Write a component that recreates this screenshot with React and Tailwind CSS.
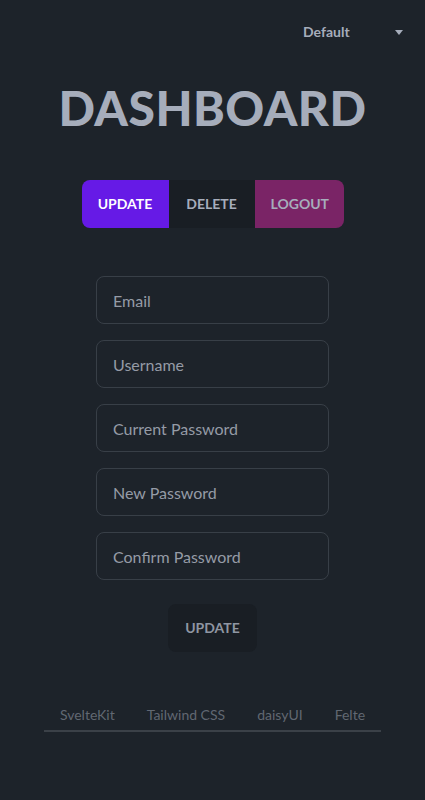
import { useState } from 'react';

const fields = ['Email', 'Username', 'Current Password', 'New Password', 'Confirm Password'];
const links = ['SvelteKit', 'Tailwind CSS', 'daisyUI', 'Felte'];

export default function App() {
  const [values, setValues] = useState({});

  return (
    <div className="min-h-screen bg-[#1d232a] text-[#a6adbb] font-['Lato',sans-serif]">
      {/* Theme picker */}
      <div className="flex justify-end p-2 h-16">
        <div className="flex items-center h-12 w-[130px] pl-4 pr-4 rounded-lg text-sm font-bold">
          <span className="flex-1">Default</span>
          <svg width="8" height="5" viewBox="0 0 8 5" className="mr-[-2px]">
            <path d="M0 0h8L4 5z" fill="#a6adbb" />
          </svg>
        </div>
      </div>

      <div className="flex flex-col items-center">
        <h1 className="mt-5 text-5xl leading-none font-black tracking-[0.01em]">DASHBOARD</h1>

        {/* Action buttons */}
        <div className="mt-12 flex h-12 rounded-lg overflow-hidden text-sm font-bold">
          <button className="px-4 w-[87px] uppercase bg-[#661ae6] text-white">Update</button>
          <button className="px-4 w-[86px] uppercase bg-[#191e24] text-[#a6adbb]">Delete</button>
          <button className="px-4 w-[89px] uppercase bg-[#7a2466] text-[#a6adbb]">Logout</button>
        </div>

        {/* Form */}
        <form className="mt-12 flex flex-col items-center gap-4" onSubmit={(e) => e.preventDefault()}>
          {fields.map((f) => (
            <input
              key={f}
              type={f.includes('Password') ? 'password' : 'text'}
              placeholder={f}
              value={values[f] || ''}
              onChange={(e) => setValues({ ...values, [f]: e.target.value })}
              className="w-[233px] h-12 px-4 rounded-lg bg-transparent border border-[#383f47] text-base outline-none placeholder:text-[#959ba6]"
            />
          ))}
          <button className="mt-2 h-12 w-[89px] rounded-lg bg-[#191e24] text-sm font-bold text-[#8f96a2]">
            UPDATE
          </button>
        </form>

        {/* Footer tabs */}
        <div className="mt-12 flex text-sm text-[#a6adbb]/50">
          {links.map((l) => (
            <a key={l} className="h-8 px-4 flex items-center border-b-2 border-[#3b4148]">
              {l}
            </a>
          ))}
        </div>
      </div>
    </div>
  );
}
